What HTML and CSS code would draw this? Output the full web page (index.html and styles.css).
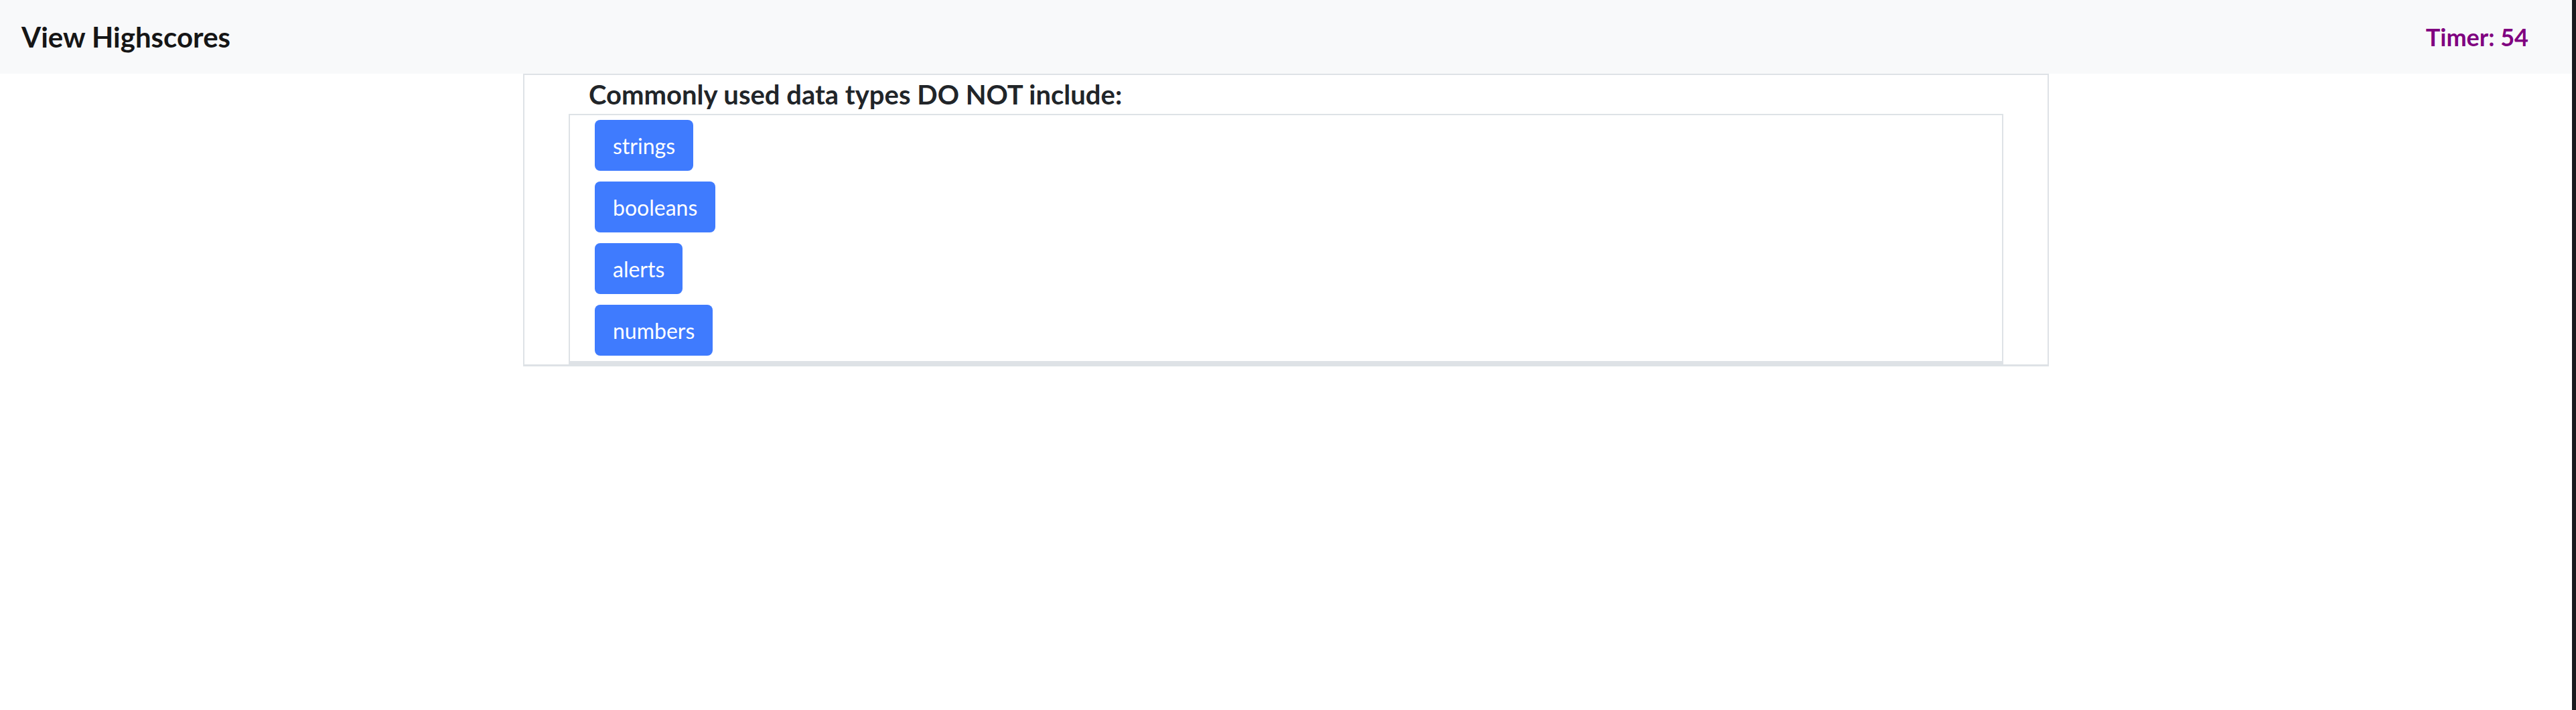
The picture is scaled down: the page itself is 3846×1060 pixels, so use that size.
FILE: index.html
```html
<!DOCTYPE html>
<html lang="en">
<head>
<meta charset="utf-8">
<title>Code Quiz</title>
<link rel="stylesheet" href="styles.css">
</head>
<body>
<div class="app">
  <header class="topbar">
    <a class="highscores" href="#">View Highscores</a>
    <span class="timer">Timer: 54</span>
  </header>
  <main class="card">
    <h2 class="question">Commonly used data types DO NOT include:</h2>
    <div class="choices">
      <button class="choice">strings</button>
      <button class="choice">booleans</button>
      <button class="choice">alerts</button>
      <button class="choice">numbers</button>
    </div>
  </main>
</div>
<div class="edge"></div>
</body>
</html>
```

FILE: styles.css
```css
html, body {
  margin: 0;
  padding: 0;
  height: 100%;
}
body {
  display: flex;
  background: #ffffff;
  font-family: Lato, "Noto Sans", sans-serif;
}
.app {
  flex: 1;
  min-width: 0;
}
.edge {
  width: 6px;
  background: #18191d;
}
.topbar {
  height: 110px;
  box-sizing: border-box;
  background: #f8f9fa;
  display: flex;
  align-items: center;
  justify-content: space-between;
  padding: 0 65px 0 32px;
}
.highscores {
  color: #161616;
  text-decoration: none;
  font-weight: 700;
  font-size: 42px;
}
.timer {
  color: #800080;
  font-weight: 700;
  font-size: 36px;
}
.card {
  width: 2278px;
  box-sizing: border-box;
  margin: 0 auto;
  border: 2px solid #dee2e6;
  border-bottom-width: 3px;
  padding: 0 66px;
}
.question {
  margin: 0 0 0 30px;
  font-size: 40px;
  line-height: 58px;
  font-weight: 700;
  color: #212529;
}
.choices {
  border: 2px solid #dee2e6;
  border-bottom-width: 5px;
  padding: 7px 0 8px 37px;
  display: flex;
  flex-direction: column;
  align-items: flex-start;
  gap: 16px;
}
.choice {
  height: 76px;
  padding: 0 27px;
  border: none;
  border-radius: 8px;
  background: #3f7bfe;
  color: #ffffff;
  font-family: Lato, "Noto Sans", sans-serif;
  font-size: 32px;
  cursor: pointer;
}
```
